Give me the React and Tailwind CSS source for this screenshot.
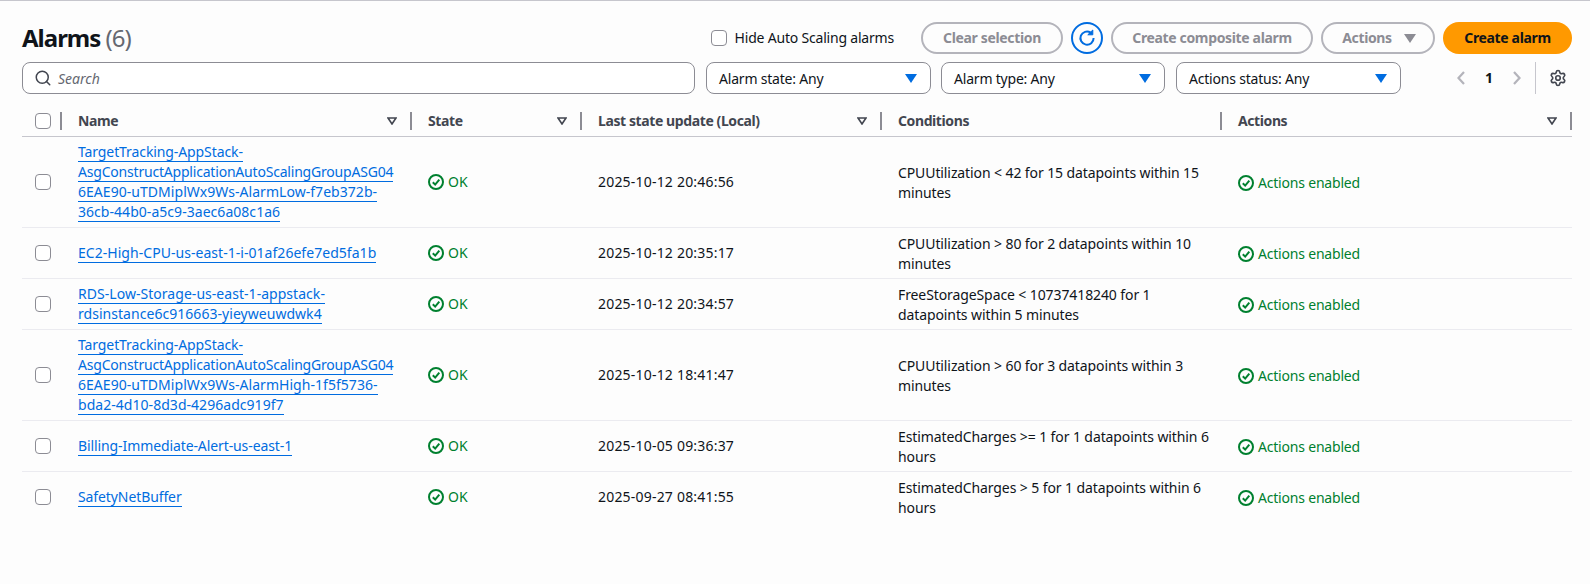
import React from 'react';
import { Search, Settings } from 'lucide-react';

const ALARMS = [
  {
    name: [
      'TargetTracking-AppStack-',
      'AsgConstructApplicationAutoScalingGroupASG04',
      '6EAE90-uTDMiplWx9Ws-AlarmLow-f7eb372b-',
      '36cb-44b0-a5c9-3aec6a08c1a6'
    ],
    updated: '2025-10-12 20:46:56',
    condition: ['CPUUtilization < 42 for 15 datapoints within 15', 'minutes']
  },
  {
    name: ['EC2-High-CPU-us-east-1-i-01af26efe7ed5fa1b'],
    updated: '2025-10-12 20:35:17',
    condition: ['CPUUtilization > 80 for 2 datapoints within 10', 'minutes']
  },
  {
    name: ['RDS-Low-Storage-us-east-1-appstack-', 'rdsinstance6c916663-yieyweuwdwk4'],
    updated: '2025-10-12 20:34:57',
    condition: ['FreeStorageSpace < 10737418240 for 1', 'datapoints within 5 minutes']
  },
  {
    name: [
      'TargetTracking-AppStack-',
      'AsgConstructApplicationAutoScalingGroupASG04',
      '6EAE90-uTDMiplWx9Ws-AlarmHigh-1f5f5736-',
      'bda2-4d10-8d3d-4296adc919f7'
    ],
    updated: '2025-10-12 18:41:47',
    condition: ['CPUUtilization > 60 for 3 datapoints within 3', 'minutes']
  },
  {
    name: ['Billing-Immediate-Alert-us-east-1'],
    updated: '2025-10-05 09:36:37',
    condition: ['EstimatedCharges >= 1 for 1 datapoints within 6', 'hours']
  },
  {
    name: ['SafetyNetBuffer'],
    updated: '2025-09-27 08:41:55',
    condition: ['EstimatedCharges > 5 for 1 datapoints within 6', 'hours']
  }
];

const COLS = 'grid grid-cols-[40px_350px_170px_300px_340px_350px]';

const lineTracking = (line) => {
  if (line.startsWith('Asg')) return 'tracking-[-0.2px]';
  if (/^(Target|Billing|Safety)/.test(line)) return 'tracking-[-0.1px]';
  return 'tracking-[0.04px]';
};

const Checkbox = () => (
  <span className="block w-4 h-4 rounded-[4px] border border-[#8c8c94] bg-white" />
);

const StatusIcon = () => (
  <svg width="16" height="16" viewBox="0 0 16 16" fill="none" stroke="#00802f" strokeWidth="2" className="shrink-0">
    <circle cx="8" cy="8" r="7" />
    <path d="M4.8 8.2 7.2 10.6 11.3 5.6" />
  </svg>
);

const SortCaret = () => (
  <svg width="10" height="8" viewBox="0 0 10 8" fill="none" stroke="#424650" strokeWidth="1.6" className="shrink-0">
    <path d="M1 1h8L5 7z" />
  </svg>
);

const HeaderCell = ({ label, sort }) => (
  <div className="h-[18px] flex items-center justify-between pl-4 pr-[13px] border-r-2 border-[#8c8c94]">
    <span>{label}</span>
    {sort && <SortCaret />}
  </div>
);

const Caret = ({ color }) => (
  <svg width="12" height="9" viewBox="0 0 12 9" className="shrink-0">
    <path d="M0 0h12L6 9z" fill={color} />
  </svg>
);

const PageArrow = ({ d }) => (
  <svg width="8" height="14" viewBox="0 0 8 14" fill="none" stroke="#b4b4bb" strokeWidth="2.2" className="shrink-0">
    <path d={d} />
  </svg>
);

const GhostButton = ({ className, children }) => (
  <button className={`h-8 rounded-full border-2 border-[#b4b4bb] text-[#8c8c94] font-bold tracking-[-0.35px] flex items-center justify-center ${className}`}>
    {children}
  </button>
);

const FilterSelect = ({ label, className }) => (
  <div className={`h-8 rounded-lg border border-[#8c8c94] bg-white pl-3 pr-[13px] flex items-center justify-between text-[#0f141a] tracking-[-0.2px] ${className}`}>
    <span className="pt-px">{label}</span>
    <Caret color="#006ce0" />
  </div>
);

const App = () => {
  return (
    <div className="min-h-[584px] bg-[#fdfdfd] border-t border-[#c6c6cd] pt-[21px] pl-[22px] pr-[18px] text-sm leading-5 font-['Noto_Sans',sans-serif] text-[#0f141a]">
      {/* Cabecera */}
      <div className="flex items-center h-8">
        <h1 className="text-[24px] leading-8 font-bold tracking-[-1px]">
          Alarms <span className="font-normal text-[#656871]">(6)</span>
        </h1>
        <label className="ml-auto flex items-center gap-[8px] mr-[27px] tracking-[-0.2px]">
          <Checkbox />
          <span>Hide Auto Scaling alarms</span>
        </label>
        <div className="flex items-center gap-2">
          <GhostButton className="w-[142px]">Clear selection</GhostButton>
          <button className="w-8 h-8 rounded-full border-2 border-[#006ce0] flex items-center justify-center">
            <svg width="18" height="18" viewBox="0 0 18 18" fill="none" stroke="#006ce0" strokeWidth="2">
              <path d="M12.6 3.6A6.6 6.6 0 1 0 15.6 9" />
              <path d="M9.8 5.8h5V1z" fill="#006ce0" strokeWidth="1" />
            </svg>
          </button>
          <GhostButton className="w-[202px]">Create composite alarm</GhostButton>
          <GhostButton className="w-[114px] gap-[12px] pl-[2px]">
            Actions
            <Caret color="#8c8c94" />
          </GhostButton>
          <button className="w-[129px] h-8 rounded-full bg-[#ff9900] font-bold tracking-[-0.35px] text-[#0f141a]">Create alarm</button>
        </div>
      </div>

      {/* Filtros */}
      <div className="flex items-center mt-2 h-8">
        <div className="w-[673px] h-8 rounded-lg border border-[#8c8c94] bg-white flex items-center pl-[11px] gap-[6px] text-[#656871] italic">
          <Search size={18} strokeWidth={2} color="#424650" />
          <span className="pt-[2px]">Search</span>
        </div>
        <FilterSelect label="Alarm state: Any" className="w-[225px] ml-[11px]" />
        <FilterSelect label="Alarm type: Any" className="w-[224px] ml-[10px]" />
        <FilterSelect label="Actions status: Any" className="w-[225px] ml-[11px]" />
        <div className="flex items-center ml-[56px]">
          <PageArrow d="M7 1 1.5 7 7 13" />
          <span className="font-bold w-[48px] text-center">1</span>
          <PageArrow d="M1 1 6.5 7 1 13" />
        </div>
        <span className="w-px h-8 bg-[#c6c6cd] ml-[14px]" />
        <Settings size={18} color="#424650" strokeWidth={2.2} className="ml-[13px]" />
      </div>

      {/* Tabla */}
      <div className="mt-[12px] w-[1550px]">
        <div className={`${COLS} items-center h-[31px] border-b border-[#c6c6cd] font-bold text-[#424650] tracking-[-0.4px]`}>
          <div className="h-[18px] flex items-center pl-[13px] border-r-2 border-[#8c8c94]"><Checkbox /></div>
          <HeaderCell label="Name" sort />
          <HeaderCell label="State" sort />
          <HeaderCell label="Last state update (Local)" sort />
          <HeaderCell label="Conditions" />
          <HeaderCell label="Actions" sort />
        </div>
        {ALARMS.map((alarm) => (
          <div key={alarm.updated} className={`${COLS} items-center border-b last:border-b-0 border-[#ebebf0] py-[5px]`}>
            <div className="pl-[13px]"><Checkbox /></div>
            <div className="pl-4">
              {alarm.name.map((line) => (
                <div key={line} className="h-5">
                  <a
                    href="#"
                    className={`inline-block h-5 border-b border-[#006ce0] text-[#006ce0] whitespace-nowrap ${lineTracking(line)}`}
                  >
                    {line}
                  </a>
                </div>
              ))}
            </div>
            <div className="pl-4 flex items-center gap-[4px] text-[#00802f]">
              <StatusIcon />
              <span>OK</span>
            </div>
            <div className="pl-4 tracking-[0.2px]">{alarm.updated}</div>
            <div className="pl-4 translate-y-px tracking-[-0.1px]">
              {alarm.condition.map((line) => (
                <div key={line} className="whitespace-nowrap">{line}</div>
              ))}
            </div>
            <div className="pl-4 pt-[2px] flex items-center gap-[4px] text-[#00802f] tracking-[-0.2px]">
              <StatusIcon />
              <span>Actions enabled</span>
            </div>
          </div>
        ))}
      </div>
    </div>
  );
};

export default App;
